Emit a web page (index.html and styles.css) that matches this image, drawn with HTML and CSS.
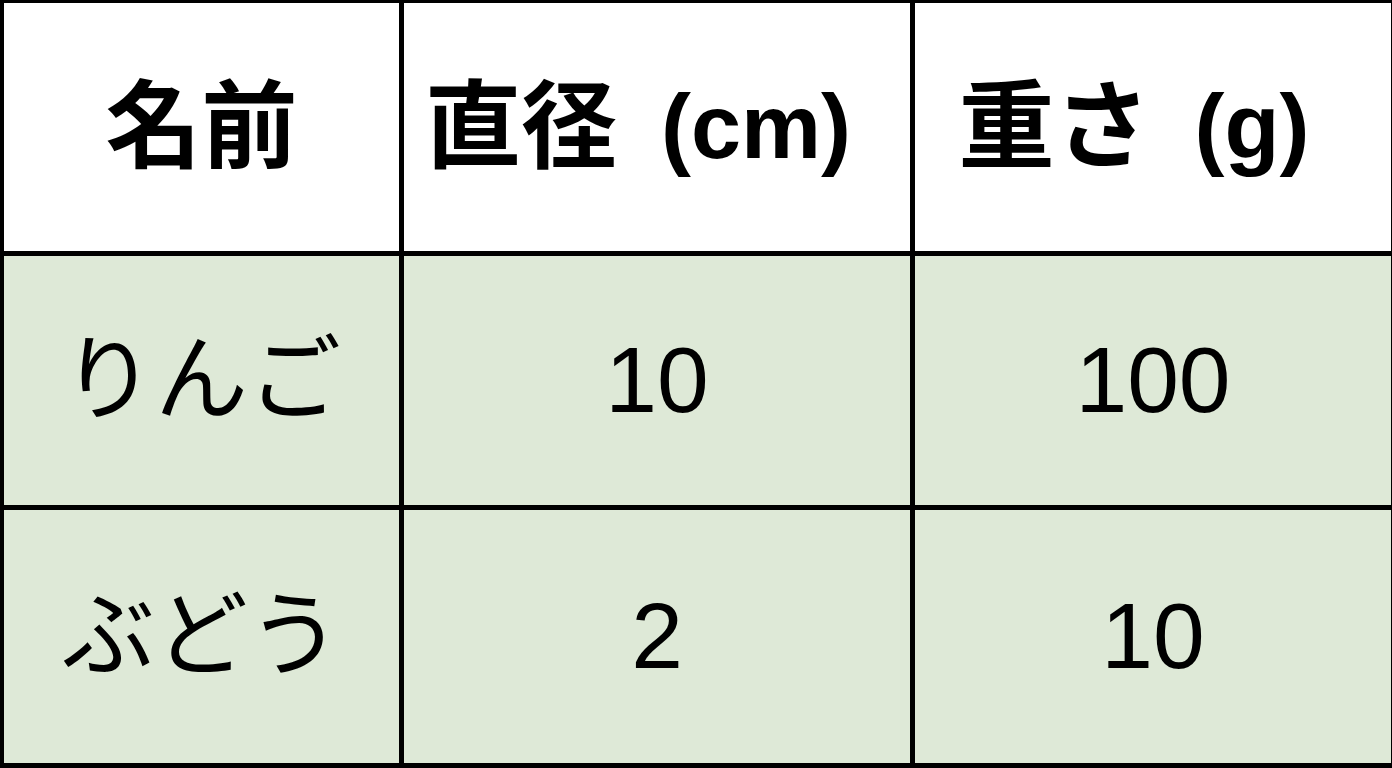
FILE: index.html
```html
<!DOCTYPE html>
<html lang="ja">
<head>
<meta charset="utf-8">
<link rel="stylesheet" href="styles.css">
</head>
<body>
<div class="table">
  <div class="cell head">名前</div>
  <div class="cell head shift">直径<span class="sp"> </span><span class="lat">(cm)</span></div>
  <div class="cell head shift">重さ<span class="sp"> </span><span class="lat">(g)</span></div>
  <div class="cell body">りんご</div>
  <div class="cell body">10</div>
  <div class="cell body">100</div>
  <div class="cell body">ぶどう</div>
  <div class="cell body">2</div>
  <div class="cell body">10</div>
</div>
</body>
</html>
```
FILE: styles.css
```css
html, body {
  margin: 0;
  padding: 0;
  background: #000;
}
.table {
  width: 1392px;
  height: 768px;
  box-sizing: border-box;
  background: #000;
  padding: 3px 1px 5px 4px;
  display: grid;
  grid-template-columns: 395px 506px 476px;
  grid-template-rows: 248px 249px 253px;
  gap: 5px;
  font-family: "Liberation Sans", "Noto Sans CJK JP", sans-serif;
  color: #000;
}
.cell {
  display: flex;
  align-items: center;
  justify-content: center;
  font-size: 93px;
  line-height: 1;
}
.head {
  background: #fff;
  font-weight: bold;
  font-size: 96px;
}
.shift {
  padding-right: 38px;
}
.lat {
  font-size: 90px;
}
.body {
  background: #dee9d7;
}
.sp {
  display: inline-block;
  width: 44px;
}
```
